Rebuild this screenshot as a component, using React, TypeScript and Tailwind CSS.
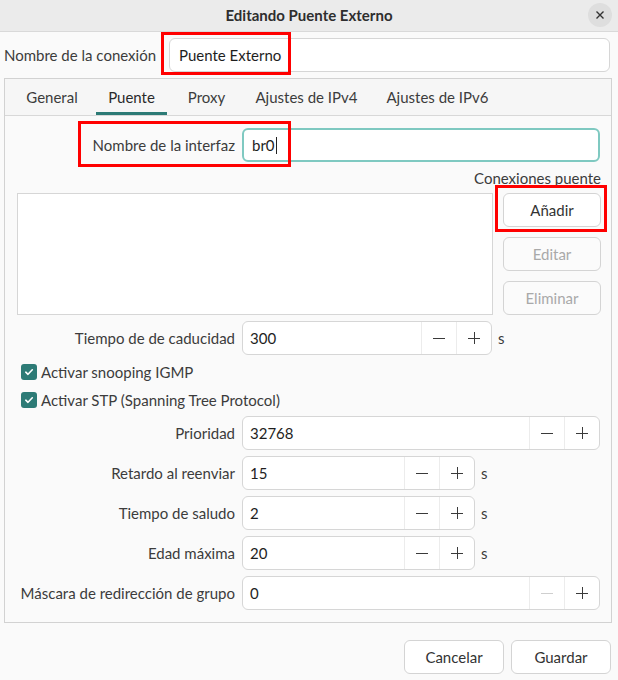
import React from "react";

const FONT = { fontFamily: "Lato, 'Noto Sans', sans-serif" };

// ─── Small pieces ─────────────────────────────────────────────────────────────
function Minus({ disabled }: { disabled?: boolean }) {
  return (
    <svg width="14" height="14" viewBox="0 0 14 14">
      <line x1="1" y1="7.5" x2="13" y2="7.5" stroke={disabled ? "#cfcfcf" : "#3a3a3a"} strokeWidth="1" />
    </svg>
  );
}

function Plus() {
  return (
    <svg width="14" height="14" viewBox="0 0 14 14">
      <line x1="1" y1="7.5" x2="13" y2="7.5" stroke="#3a3a3a" strokeWidth="1" />
      <line x1="7.5" y1="1" x2="7.5" y2="13" stroke="#3a3a3a" strokeWidth="1" />
    </svg>
  );
}

function Spin({ value, width, unit, minusDisabled }: { value: string; width: string; unit?: boolean; minusDisabled?: boolean }) {
  return (
    <div className="flex items-center">
      <div className={`${width} h-[34px] flex items-stretch bg-white border border-[#d6d6d6] rounded-[6px]`}>
        <div className="flex-1 flex items-center pl-[7px] text-[15px] text-[#1e1e1e]">{value}</div>
        <div className="w-[35px] flex items-center justify-center border-l border-[#ececec]">
          <Minus disabled={minusDisabled} />
        </div>
        <div className="w-[35px] flex items-center justify-center border-l border-[#ececec]">
          <Plus />
        </div>
      </div>
      {unit && <span className="ml-[6px] text-[15px] text-[#3c3c3c]">s</span>}
    </div>
  );
}

function Row({ label, children }: { label: string; children: React.ReactNode }) {
  return (
    <div className="flex items-center">
      <div className="w-[218px] text-right text-[15px] text-[#3c3c3c] whitespace-nowrap">{label}</div>
      <div className="ml-[7px]">{children}</div>
    </div>
  );
}

function Check({ label }: { label: string }) {
  return (
    <div className="h-[28px] flex items-center ml-[4px]">
      <div className="w-[16px] h-[16px] rounded-[3px] bg-[#2d7b76] flex items-center justify-center">
        <svg width="10" height="10" viewBox="0 0 10 10">
          <path d="M1.8 5.2 L4 7.3 L8.3 2.8" fill="none" stroke="#fff" strokeWidth="1.6" strokeLinecap="round" strokeLinejoin="round" />
        </svg>
      </div>
      <span className="ml-[4px] text-[15px] text-[#3c3c3c]">{label}</span>
    </div>
  );
}

function Btn({ label, disabled, w }: { label: string; disabled?: boolean; w: string }) {
  return (
    <div
      className={`${w} h-[34px] flex items-center justify-center rounded-[6px] border border-[#d4d4d4] text-[15px] ${
        disabled ? "text-[#a9a9a9] bg-[#fbfbfb]" : "text-[#333] bg-white"
      }`}
    >
      {label}
    </div>
  );
}

const TABS = [
  { label: "General", cls: "ml-[9px] w-[76px]" },
  { label: "Puente", cls: "ml-[6px] w-[71px]", active: true },
  { label: "Proxy", cls: "ml-[6px] w-[67px]" },
  { label: "Ajustes de IPv4", cls: "ml-[8px] w-[117px]" },
  { label: "Ajustes de IPv6", cls: "ml-[14px] w-[117px]" },
];

export default function App() {
  return (
    <div className="relative w-[618px] h-[680px] bg-[#fafafa] overflow-hidden" style={FONT}>
      {/* Title bar */}
      <div className="relative h-[32px] bg-[#ebebeb] border-b border-[#d9d9d9] flex items-center justify-center">
        <span className="text-[15px] font-bold text-[#2e2e2e]">Editando Puente Externo</span>
        <div className="absolute right-[6px] top-[3px] w-[24px] h-[24px] rounded-full bg-[#dedede] flex items-center justify-center">
          <svg width="10" height="10" viewBox="0 0 10 10">
            <path d="M1.5 1.5 L8.5 8.5 M8.5 1.5 L1.5 8.5" stroke="#333" strokeWidth="1.4" />
          </svg>
        </div>
      </div>

      {/* Connection name */}
      <div className="flex items-center pl-[4px] pt-[6px]">
        <span className="w-[158px] text-[15px] text-[#3c3c3c] whitespace-nowrap">Nombre de la conexión</span>
        <div className="ml-[7px] w-[441px] h-[34px] flex items-center pl-[9px] bg-white border border-[#d6d6d6] rounded-[6px] text-[15px] text-[#1e1e1e]">
          Puente Externo
        </div>
      </div>

      {/* Notebook */}
      <div className="ml-[4px] mr-[6px] mt-[6px] border border-[#d2d2d2]">
        <div className="h-[37px] flex items-stretch bg-[#f6f6f6] border-b border-[#d8d8d8]">
          {TABS.map((t) => (
            <div key={t.label} className={`${t.cls} relative flex items-center justify-center text-[15px] ${t.active ? "text-[#2a2a2a]" : "text-[#3c3c3c]"}`}>
              {t.label}
              {t.active && <div className="absolute left-0 right-0 bottom-0 h-[3px] bg-[#2d7b76]" />}
            </div>
          ))}
        </div>

        <div className="pl-[12px] pr-[10px] pt-[12px] pb-[12px] bg-[#fafafa]">
          <Row label="Nombre de la interfaz">
            <div className="w-[358px] h-[34px] flex items-center pl-[8px] bg-white border-2 border-[#7fc9c1] rounded-[6px] text-[15px] text-[#1e1e1e]">
              br0<span className="w-px h-[17px] bg-[#222] ml-px" />
            </div>
          </Row>

          <div className="mt-[6px] h-[20px] flex items-center justify-end text-[15px] text-[#3c3c3c]">Conexiones puente</div>

          <div className="mt-[5px] flex">
            <div className="w-[476px] h-[122px] bg-white border border-[#d6d6d6]" />
            <div className="ml-[10px] flex flex-col gap-[10px]">
              <Btn label="Añadir" w="w-[98px]" />
              <Btn label="Editar" w="w-[98px]" disabled />
              <Btn label="Eliminar" w="w-[98px]" disabled />
            </div>
          </div>

          <div className="mt-[6px]">
            <Row label="Tiempo de de caducidad">
              <Spin value="300" width="w-[250px]" unit />
            </Row>
          </div>

          <div className="mt-[3px]">
            <Check label="Activar snooping IGMP" />
            <Check label="Activar STP (Spanning Tree Protocol)" />
          </div>

          <div className="mt-[2px] flex flex-col gap-[6px]">
            <Row label="Prioridad">
              <Spin value="32768" width="w-[358px]" />
            </Row>
            <Row label="Retardo al reenviar">
              <Spin value="15" width="w-[233px]" unit />
            </Row>
            <Row label="Tiempo de saludo">
              <Spin value="2" width="w-[233px]" unit />
            </Row>
            <Row label="Edad máxima">
              <Spin value="20" width="w-[233px]" unit />
            </Row>
            <Row label="Máscara de redirección de grupo">
              <Spin value="0" width="w-[358px]" minusDisabled />
            </Row>
          </div>
        </div>
      </div>

      {/* Dialog buttons */}
      <div className="mt-[17px] flex justify-end gap-[7px] pr-[7px]">
        <Btn label="Cancelar" w="w-[100px]" />
        <Btn label="Guardar" w="w-[100px]" />
      </div>

      {/* Annotation boxes */}
      <div className="absolute left-[161px] top-[32px] w-[130px] h-[43px] border-[3px] border-[#ff0000]" />
      <div className="absolute left-[78px] top-[121px] w-[213px] h-[46px] border-[3px] border-[#ff0000]" />
      <div className="absolute left-[495px] top-[185px] w-[112px] h-[47px] border-[3px] border-[#ff0000]" />
    </div>
  );
}
